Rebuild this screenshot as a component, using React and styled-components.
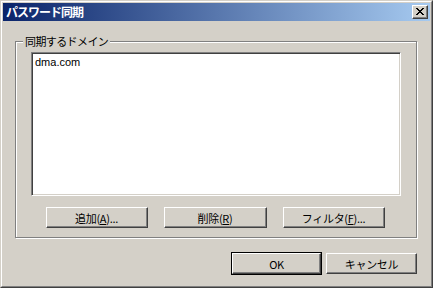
import React from "react";
import styled, { createGlobalStyle } from "styled-components";

const GlobalStyle = createGlobalStyle`
   html, body {
      margin: 0;
      padding: 0;
      background: #d4d0c8;
   }
   * {
      box-sizing: border-box;
   }
`;

const Window = styled.div`
   width: 433px;
   height: 288px;
   background: #d4d0c8;
   border: 1px solid;
   border-color: #d4d0c8 #404040 #404040 #d4d0c8;
   font-family: "Noto Sans CJK JP", "Liberation Sans", sans-serif;
`;

const Frame = styled.div`
   height: 100%;
   border: 1px solid;
   border-color: #ffffff #808080 #808080 #ffffff;
   padding: 1px;
   display: flex;
   flex-direction: column;
`;

const TitleBar = styled.div`
   height: 18px;
   flex: none;
   display: flex;
   align-items: center;
   justify-content: space-between;
   padding: 0 2px 0 3px;
   background: linear-gradient(to right, #0a246a, #a6caf0);
`;

const Title = styled.span`
   color: #fff;
   font-weight: bold;
   font-size: 12px;
   letter-spacing: -1px;
   line-height: 18px;
`;

const CloseButton = styled.div`
   width: 16px;
   height: 14px;
   background: #d4d0c8;
   border: 1px solid;
   border-color: #ffffff #404040 #404040 #ffffff;
   box-shadow: inset -1px -1px 0 #808080;
   display: flex;
   align-items: center;
   justify-content: center;
   padding: 0 1px 1px 0;
`;

const Client = styled.div`
   flex: 1;
   display: flex;
   flex-direction: column;
   padding: 20px 13px 0 12px;
`;

const GroupBox = styled.div`
   position: relative;
   height: 197px;
   border: 1px solid #808080;
   box-shadow: inset 1px 1px 0 #fff, 1px 1px 0 #fff;
   padding: 10px 15px 0 15px;
   display: flex;
   flex-direction: column;
`;

const Legend = styled.span`
   position: absolute;
   top: -7px;
   left: 7px;
   padding: 0 2px;
   background: #d4d0c8;
   color: #000;
   font-size: 11px;
   letter-spacing: -0.6px;
   line-height: 13px;
`;

const ListBox = styled.div`
   height: 144px;
   background: #fff;
   border: 1px solid;
   border-color: #808080 #ffffff #ffffff #808080;
   box-shadow: inset 1px 1px 0 #404040, inset -1px -1px 0 #d4d0c8;
   padding: 2px 3px;
`;

const ListItem = styled.div`
   font-family: "Liberation Sans", Arial, sans-serif;
   font-size: 11px;
   line-height: 14px;
   color: #000;
`;

const ButtonRow = styled.div`
   display: flex;
   justify-content: center;
   gap: 16px;
   margin-top: 11px;
   padding-right: 2px;
`;

const Button = styled.div`
   width: ${(p) => p.$w}px;
   height: 21px;
   background: #d4d0c8;
   border: 1px solid;
   border-color: #ffffff #404040 #404040 #ffffff;
   box-shadow: inset -1px -1px 0 #808080;
   display: flex;
   align-items: center;
   justify-content: center;
   font-size: 11px;
   letter-spacing: -0.3px;
   color: #000;
   outline: ${(p) => (p.$default ? "1px solid #000" : "none")};
   outline-offset: 0;
   u {
      text-decoration: underline;
   }
`;

const Footer = styled.div`
   display: flex;
   justify-content: flex-end;
   gap: 5px;
   margin-top: 15px;
   padding-right: 0;
`;

const CloseIcon = () => (
   <svg width="8" height="7" viewBox="0 0 8 7" shapeRendering="crispEdges">
      <path
         d="M0 0h2v1h1v1h2v-1h1v-1h2v1h-1v1h-1v1h-1v1h1v1h1v1h1v1h-2v-1h-1v-1h-2v1h-1v1h-2v-1h1v-1h1v-1h1v-1h-1v-1h-1v-1h-1z"
         fill="#000"
      />
   </svg>
);

const App = () => {
   return (
      <>
         <GlobalStyle />
         <Window>
            <Frame>
               <TitleBar>
                  <Title>パスワード同期</Title>
                  <CloseButton>
                     <CloseIcon />
                  </CloseButton>
               </TitleBar>
               <Client>
                  <GroupBox>
                     <Legend>同期するドメイン</Legend>
                     <ListBox>
                        <ListItem>dma.com</ListItem>
                     </ListBox>
                     <ButtonRow>
                        <Button $w={102}>
                           追加(<u>A</u>)...
                        </Button>
                        <Button $w={103}>
                           削除(<u>R</u>)
                        </Button>
                        <Button $w={102}>
                           フィルタ(<u>F</u>)...
                        </Button>
                     </ButtonRow>
                  </GroupBox>
                  <Footer>
                     <Button $w={89} $default>
                        OK
                     </Button>
                     <Button $w={91}>キャンセル</Button>
                  </Footer>
               </Client>
            </Frame>
         </Window>
      </>
   );
};

export default App;
